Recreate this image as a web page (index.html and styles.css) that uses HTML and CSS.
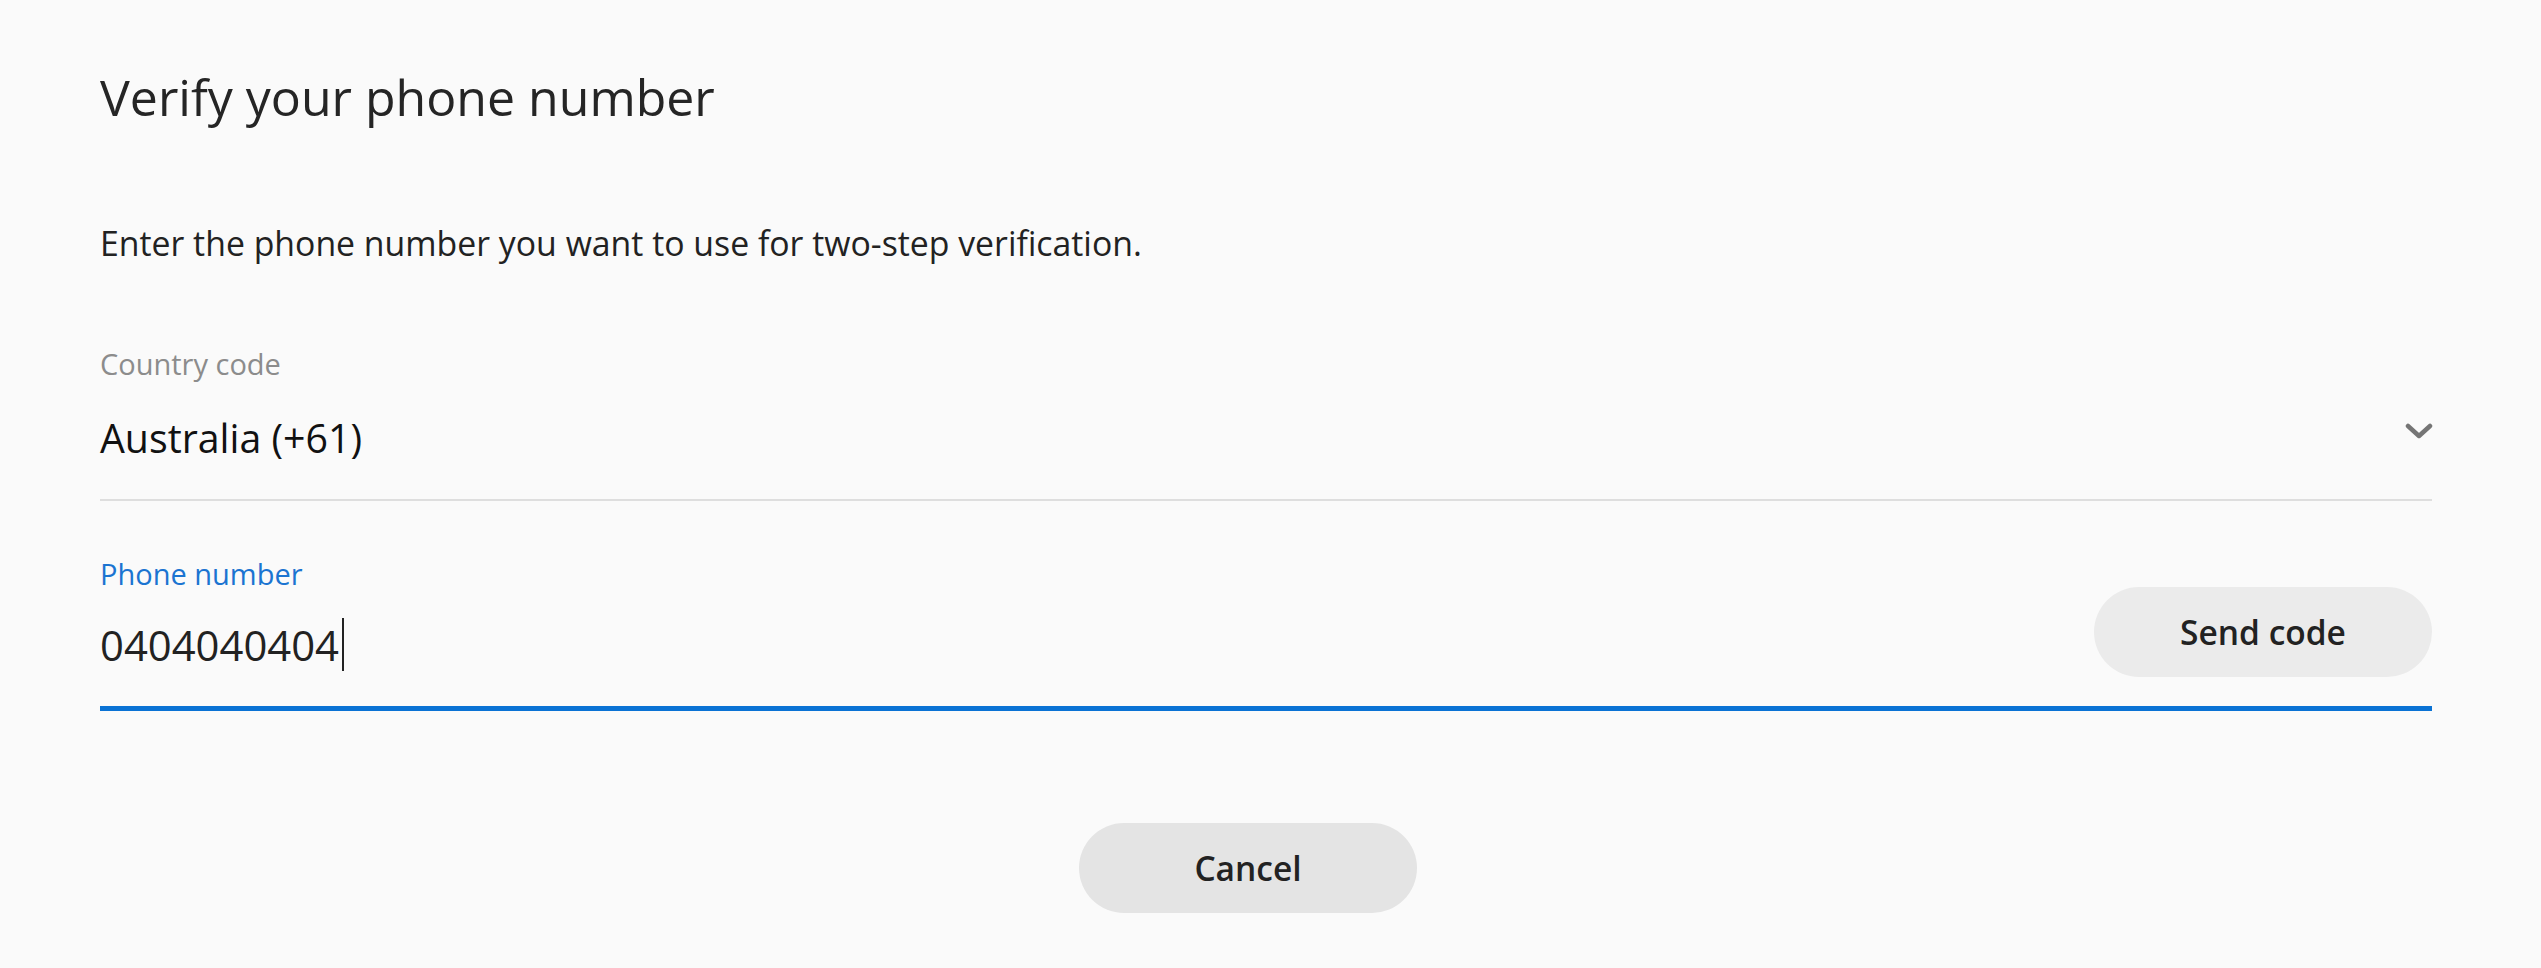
FILE: index.html
```html
<!DOCTYPE html>
<html lang="en">
<head>
<meta charset="utf-8">
<title>Verify your phone number</title>
<link rel="stylesheet" href="styles.css">
</head>
<body>
<main class="page">
  <h1 class="title">Verify your phone number</h1>
  <p class="desc">Enter the phone number you want to use for two-step verification.</p>

  <div class="field select-field">
    <div class="field-main">
      <label class="label">Country code</label>
      <div class="value">Australia (+61)</div>
    </div>
    <svg class="chevron" width="28" height="18" viewBox="0 0 28 18" aria-hidden="true">
      <polyline points="3,3 14,13 25,3" fill="none" stroke="#757575" stroke-width="4.5" stroke-linecap="round" stroke-linejoin="round"/>
    </svg>
  </div>

  <div class="field phone-field">
    <div class="field-main">
      <label class="label label-active">Phone number</label>
      <div class="value digits">0404040404<span class="caret"></span></div>
    </div>
    <button class="btn btn-send" type="button">Send code</button>
  </div>

  <div class="footer">
    <button class="btn btn-cancel" type="button">Cancel</button>
  </div>
</main>
</body>
</html>
```

FILE: styles.css
```css
* { box-sizing: border-box; }
html, body { margin: 0; padding: 0; }
body {
  background: #fafafa;
  font-family: "Open Sans", "Noto Sans", sans-serif;
  color: #252525;
}
.page {
  padding: 67px 109px 0 100px;
}
.title {
  margin: 0;
  font-size: 50px;
  line-height: 60px;
  font-weight: 400;
  color: #252525;
}
.desc {
  margin: 96px 0 0;
  font-size: 33.8px;
  line-height: 40px;
  color: #222;
}
.field {
  display: flex;
  justify-content: space-between;
}
.select-field {
  margin-top: 83px;
  padding-bottom: 37px;
  border-bottom: 2px solid #dedede;
}
.field-main {
  display: flex;
  flex-direction: column;
}
.label {
  font-size: 29px;
  line-height: 36px;
  color: #8c8c8c;
}
.label-active { color: #1b74d1; }
.value {
  margin-top: 32px;
  font-size: 39.3px;
  line-height: 48px;
  color: #111;
}
.chevron {
  align-self: flex-end;
  margin-bottom: 21px;
  margin-right: -1px;
}
.phone-field {
  margin-top: 55px;
  align-items: flex-end;
  padding-bottom: 29px;
  border-bottom: 5px solid #0a72d4;
}
.phone-field .field-main { padding-bottom: 8px; }
.digits {
  margin-top: 29px;
  font-size: 41.8px;
  line-height: 48px;
  color: #222;
  display: flex;
  align-items: center;
}
.caret {
  display: block;
  width: 2px;
  height: 53px;
  margin: -3px 0 -2px 3px;
  background: #222;
}
.btn {
  border: none;
  border-radius: 45px;
  height: 90px;
  width: 338px;
  font-family: inherit;
  font-size: 33.5px;
  font-weight: 600;
  color: #222;
  cursor: pointer;
  padding: 0;
}
.btn-send { background: #ebebeb; }
.footer {
  display: flex;
  justify-content: center;
  padding-right: 36px;
  margin-top: 112px;
}
.btn-cancel { background: #e4e4e4; }
```
